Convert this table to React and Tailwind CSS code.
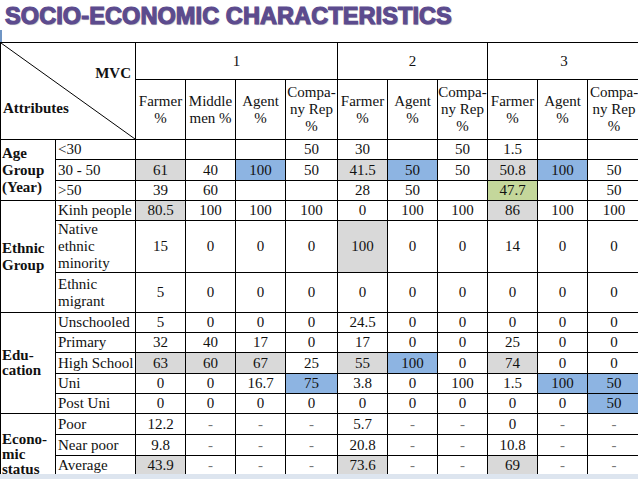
import React from 'react'

const G = 'bg-[#d9d9d9]'
const B = 'bg-[#8db4e2]'
const N = 'bg-[#c4d79b]'

// each value: string, or [string, bgClass]
const groups = [
  {
    title: ['Age', 'Group', '(Year)'],
    lh: 'leading-[17px]',
    rows: [
      { label: '<30', h: 'h-[20px]', v: ['', '', '', '50', '30', '', '50', '1.5', '', ''] },
      { label: '30 - 50', h: 'h-[21px]', v: [['61', G], '40', ['100', B], '50', ['41.5', G], ['50', B], '50', ['50.8', G], ['100', B], '50'] },
      { label: '>50', h: 'h-[20px]', v: ['39', '60', '', '', '28', '50', '', ['47.7', N], '', '50'] },
    ],
  },
  {
    title: ['Ethnic', 'Group'],
    lh: 'leading-[17px]',
    rows: [
      { label: 'Kinh people', h: 'h-[20px]', v: [['80.5', G], '100', '100', '100', '0', '100', '100', ['86', G], '100', '100'] },
      { label: 'Native ethnic minority', h: 'h-[52px]', v: ['15', '0', '0', '0', ['100', G], '0', '0', '14', '0', '0'] },
      { label: 'Ethnic migrant', h: 'h-[40px]', v: ['5', '0', '0', '0', '0', '0', '0', '0', '0', '0'] },
    ],
  },
  {
    title: ['Edu-', 'cation'],
    lh: 'leading-[15px]',
    rows: [
      { label: 'Unschooled', h: 'h-[20px]', v: ['5', '0', '0', '0', '24.5', '0', '0', '0', '0', '0'] },
      { label: 'Primary', h: 'h-[20px]', v: ['32', '40', '17', '0', '17', '0', '0', '25', '0', '0'] },
      { label: 'High School', h: 'h-[21px]', v: [['63', G], ['60', G], ['67', G], '25', ['55', G], ['100', B], '0', ['74', G], '0', '0'] },
      { label: 'Uni', h: 'h-[20px]', v: ['0', '0', '16.7', ['75', B], '3.8', '0', '100', '1.5', ['100', B], ['50', B]] },
      { label: 'Post Uni', h: 'h-[20px]', v: ['0', '0', '0', '0', '0', '0', '0', '0', '0', ['50', B]] },
    ],
  },
  {
    title: ['Econo-', 'mic', 'status'],
    lh: 'leading-[15px]',
    rows: [
      { label: 'Poor', h: 'h-[21px]', v: ['12.2', '-', '-', '-', '5.7', '-', '-', '0', '-', '-'] },
      { label: 'Near poor', h: 'h-[21px]', v: ['9.8', '-', '-', '-', '20.8', '-', '-', '10.8', '-', '-'] },
      { label: 'Average', h: 'h-[20px]', v: [['43.9', G], '-', '-', '-', ['73.6', G], '-', '-', ['69', G], '-', '-'] },
      { label: '', h: 'h-[20px]', v: ['', '', '', '', '', '', '', '', '', ''] },
    ],
  },
]

const subHeads = [
  ['Farmer', '%'],
  ['Middle', 'men %'],
  ['Agent', '%'],
  ['Compa-', 'ny Rep', '%'],
  ['Farmer', '%'],
  ['Agent', '%'],
  ['Compa-', 'ny Rep', '%'],
  ['Farmer', '%'],
  ['Agent', '%'],
  ['Compa-', 'ny Rep', '%'],
]

const td = 'border border-black p-0'

function Value({ v }) {
  const [text, bg] = Array.isArray(v) ? v : [v, '']
  return (
    <td className={`${td} text-center align-middle ${bg} ${text === '-' ? 'text-[#777]' : ''}`}>
      {text}
    </td>
  )
}

export default function App() {
  return (
    <div className="relative w-[638px] h-[479px] overflow-hidden bg-white text-[#111]">
      {/* title */}
      <div className="h-[42px] pl-[5px] pt-[2px]">
        <h1 className="text-[23.5px] leading-[28px] font-bold text-[#5c4b8e] tracking-[0.1px] [font-family:'Liberation_Sans',Arial,sans-serif] [-webkit-text-stroke:1.2px_#5c4b8e] [text-shadow:1px_1px_1px_rgba(0,0,0,0.25)]">
          SOCIO-ECONOMIC CHARACTERISTICS
        </h1>
      </div>
      <div className="absolute left-0 top-[30px] w-[2px] h-[12px] bg-[#6f95c4]" />

      <table className="table-fixed border-collapse w-[640px] text-[15px] leading-[17px] [font-family:'Liberation_Serif','Times_New_Roman',serif]">
        <colgroup>
          <col className="w-[55px]" />
          <col className="w-[80px]" />
          <col className="w-[50px]" />
          <col className="w-[50px]" />
          <col className="w-[50px]" />
          <col className="w-[52px]" />
          <col className="w-[50px]" />
          <col className="w-[50px]" />
          <col className="w-[50px]" />
          <col className="w-[50px]" />
          <col className="w-[50px]" />
          <col className="w-[53px]" />
        </colgroup>
        <thead>
          <tr className="h-[37px]">
            <td colSpan={2} rowSpan={2} className={`${td} relative align-top`}>
              <svg className="absolute inset-0 w-full h-full" preserveAspectRatio="none" viewBox="0 0 100 100">
                <line x1="0" y1="0" x2="100" y2="100" stroke="black" strokeWidth="1" vectorEffect="non-scaling-stroke" />
              </svg>
              <div className="flex flex-col h-[96px] font-bold">
                <span className="self-end pr-[4px] mt-[22px]">MVC</span>
                <span className="pl-[2px] mt-[18px]">Attributes</span>
              </div>
            </td>
            <td colSpan={4} className={`${td} text-center`}>1</td>
            <td colSpan={3} className={`${td} text-center`}>2</td>
            <td colSpan={3} className={`${td} text-center`}>3</td>
          </tr>
          <tr className="h-[60px]">
            {subHeads.map((lines, i) => (
              <td key={i} className={`${td} text-center align-middle`}>
                {lines.map((l, j) => (
                  <div key={j} className="whitespace-nowrap">{l}</div>
                ))}
              </td>
            ))}
          </tr>
        </thead>
        <tbody>
          {groups.map((g) =>
            g.rows.map((r, i) => (
              <tr key={g.title[0] + i} className={r.h}>
                {i === 0 && (
                  <td rowSpan={g.rows.length} className={`${td} align-middle font-bold pl-[1px] ${g.lh}`}>
                    {g.title.map((t) => (
                      <div key={t}>{t}</div>
                    ))}
                  </td>
                )}
                <td className={`${td} pl-[2px] align-middle`}>{r.label}</td>
                {r.v.map((v, k) => (
                  <Value key={k} v={v} />
                ))}
              </tr>
            ))
          )}
        </tbody>
      </table>

      <div className="absolute left-0 bottom-0 w-full h-[5px] bg-[#dde5ef]" />
    </div>
  )
}
